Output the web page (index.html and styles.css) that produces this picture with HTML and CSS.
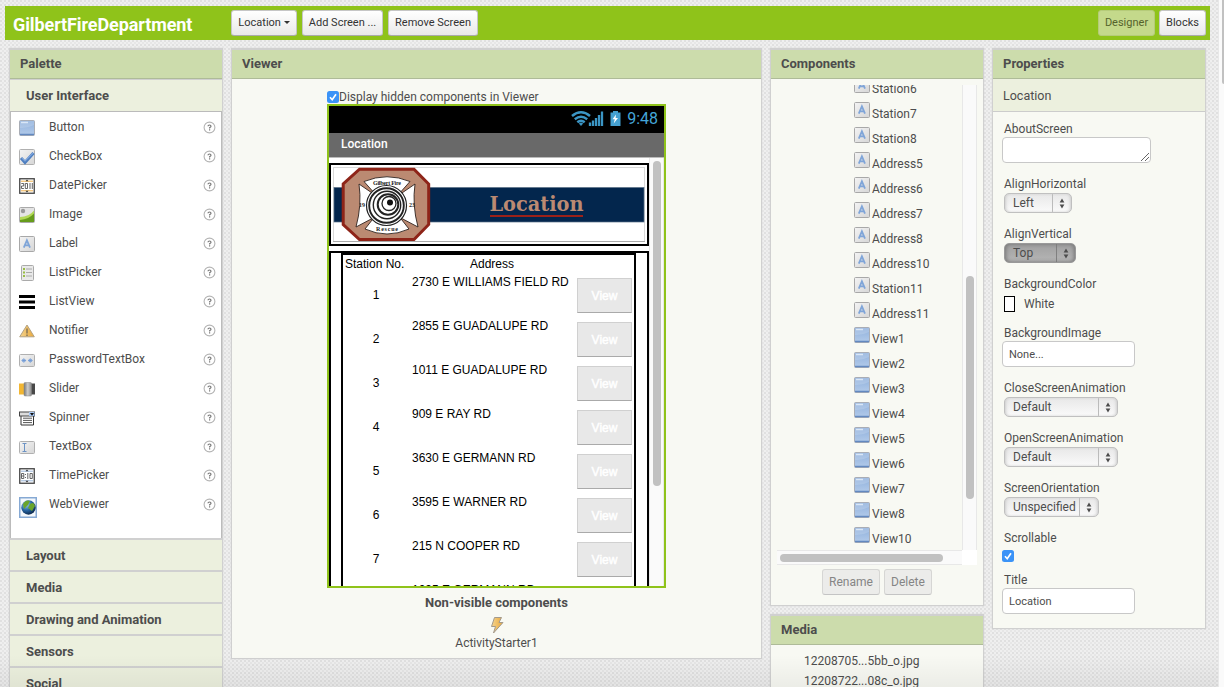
FILE: index.html
```html
<!DOCTYPE html>
<html lang="en">
<head>
<meta charset="utf-8">
<title>GilbertFireDepartment</title>
<link rel="stylesheet" href="styles.css">
</head>
<body>
<svg class="defs" width="0" height="0">
  <defs>
    <linearGradient id="blue" x1="0" y1="0" x2="0" y2="1"><stop offset="0" stop-color="#8fb0dc"/><stop offset="1" stop-color="#b3cbea"/></linearGradient>
    <linearGradient id="grey" x1="0" y1="0" x2="1" y2="1"><stop offset="0" stop-color="#f4f4f4"/><stop offset="1" stop-color="#d6d6d6"/></linearGradient>
    <linearGradient id="gold" x1="0" y1="0" x2="1" y2="0"><stop offset="0" stop-color="#f5d48e"/><stop offset="1" stop-color="#e8a83c"/></linearGradient>
    <linearGradient id="knob" x1="0" y1="0" x2="1" y2="0"><stop offset="0" stop-color="#777"/><stop offset=".5" stop-color="#ccc"/><stop offset="1" stop-color="#888"/></linearGradient>
    <radialGradient id="globe" cx=".35" cy=".3" r=".8"><stop offset="0" stop-color="#9fd0f0"/><stop offset=".5" stop-color="#2766a4"/><stop offset="1" stop-color="#061a38"/></radialGradient>
  </defs>
  <symbol id="i-button" viewBox="0 0 16 16"><rect x=".5" y=".5" width="15" height="15" rx="1" fill="url(#blue)" stroke="#a9adb5"/><path d="M1 8Q8 8.500 15 5V1H1z" fill="#fff" opacity=".16"/><path d="M2 2.500h7" stroke="#d9e6f6" stroke-width="1.500"/><path d="M1 14.500h14" stroke="#6389c0" stroke-width="1.500"/></symbol>
  <symbol id="i-check" viewBox="0 0 16 16"><rect x=".5" y=".5" width="15" height="15" rx="1" fill="url(#grey)" stroke="#b0b0b0"/><path d="M2 9l4 4.500L14.500 4" fill="none" stroke="#4f7fc0" stroke-width="3"/><path d="M3 9l3 3L14 4" fill="none" stroke="#7fa6dc" stroke-width="1.200"/></symbol>
  <symbol id="i-date" viewBox="0 0 16 16"><rect x=".75" y=".75" width="14.500" height="14.500" fill="#fff" stroke="#444" stroke-width="1.300"/><path d="M2 3.200h12M2 12.800h12" stroke="#eeb04c"/><path d="M6.500 3.200L8 1.500l1.500 1.700zM6.500 12.800L8 14.500l1.500-1.700z" fill="#333"/><path d="M2.300 5.500h2.400V8H2.500v2.500h2.400M6.300 5.500h2.200v5H6.300zM11 5v6M13.300 5v6" fill="none" stroke="#555" stroke-width=".9"/></symbol>
  <symbol id="i-image" viewBox="0 0 16 16"><rect x=".5" y=".5" width="15" height="15" rx="1" fill="#e4e4e4" stroke="#aaa"/><circle cx="4" cy="4" r="2.200" fill="#999"/><path d="M1 10Q10 10 15 3.500V15H1z" fill="#b3d957"/><path d="M1 13Q10 12 15 6.500V15H1z" fill="#669c1b"/></symbol>
  <symbol id="i-label" viewBox="0 0 16 16"><rect x=".5" y=".5" width="15" height="15" rx="1" fill="url(#grey)" stroke="#a8a8a8"/><path d="M4.800 11.700L7.900 4.300L11 11.700M5.800 9.400h4.200" fill="none" stroke="#7fa5d8" stroke-width="1.800"/></symbol>
  <symbol id="i-list" viewBox="0 0 16 16"><rect x="2.500" y=".5" width="12" height="15" rx="1" fill="#e9e9e9" stroke="#aaa"/><path d="M4 4h2M4 7.500h2M4 11h2" stroke="#98bd43" stroke-width="2"/><path d="M7 4h6M7 7.500h6M7 11h6" stroke="#aaa"/></symbol>
  <symbol id="i-lines" viewBox="0 0 16 16"><path d="M0 2.500h16M0 8h16M0 13.500h16" stroke="#000" stroke-width="3"/></symbol>
  <symbol id="i-warn" viewBox="0 0 16 16"><path d="M8 2L15.300 13.800H.7z" fill="url(#gold)" stroke="#b3a283"/><path d="M8 5.500v5M8 11.500v1.500" stroke="#776b55" stroke-width="1.300"/></symbol>
  <symbol id="i-pass" viewBox="0 0 16 16"><rect x=".5" y="2.500" width="15" height="12" rx="1" fill="url(#grey)" stroke="#b0b0b0"/><path d="M2.500 8.500h4.600M4.800 6.300v4.400M3.300 7l3 3M6.300 7l-3 3M9 8.500h4.600M11.300 6.300v4.400M9.800 7l3 3M12.800 7l-3 3" stroke="#6f9ad6" stroke-width=".9"/></symbol>
  <symbol id="i-slider" viewBox="0 0 16 16"><path d="M0 2.500h6v11H0z" fill="#f2b632"/><path d="M11 2.500h5v11h-5z" fill="#484848"/><rect x="5" y="1.500" width="7.500" height="13.500" rx="1" fill="url(#knob)" stroke="#8a8a8a" stroke-width=".5"/></symbol>
  <symbol id="i-spinner" viewBox="0 0 16 16"><path d="M2 5h12.500v10H2z" fill="#fff" stroke="#333"/><rect x=".5" y="2" width="15" height="4" fill="#ddd" stroke="#444"/><path d="M10 2h5.500v4H10z" fill="#a9c8f2"/><path d="M11 3h4l-2 2.800z" fill="#111"/><path d="M4 8.200h9M4 10.400h9M4 12.600h9" stroke="#555"/></symbol>
  <symbol id="i-text" viewBox="0 0 16 16"><rect x=".5" y="2.500" width="15" height="12" rx="1" fill="url(#grey)" stroke="#b0b0b0"/><path d="M3.500 4.500h4M5.500 4.500v8M3.500 12.500h4" stroke="#6c93c4"/></symbol>
  <symbol id="i-time" viewBox="0 0 16 16"><rect x=".75" y=".75" width="14.500" height="14.500" fill="#fff" stroke="#444" stroke-width="1.300"/><path d="M2 3.200h12M2 12.800h12" stroke="#9bb6d8"/><path d="M6.500 3.200L8 1.500l1.500 1.700zM6.500 12.800L8 14.500l1.500-1.700z" fill="#333"/><path d="M2.500 5.500h2.300v5H2.500zM2.500 8h2.300M6.500 6v1M6.500 9v1M8.800 5v6M11 5.500h2.300v5H11z" fill="none" stroke="#555" stroke-width=".9"/></symbol>
  <symbol id="i-web" viewBox="0 0 18 21"><rect x=".75" y=".75" width="16.500" height="19.500" fill="#f4f8fc" stroke="#86a9d4" stroke-width="1.500"/><circle cx="9.500" cy="10.500" r="7.200" fill="url(#globe)"/><path d="M4 7Q7 2 11 4L9 8L5 12zM11 7q4-3 5 2l-3 5-4-3z" fill="#69a52b"/></symbol>
  <symbol id="i-help" viewBox="0 0 13 13"><circle cx="6.500" cy="6.500" r="5.400" fill="#fff" stroke="#b4b4b4" stroke-width="1.100"/><path d="M5 5.300Q5 4 6.500 4T8 5.200Q8 6 6.600 6.700V7.500M6.600 8.300v1.200" fill="none" stroke="#777" stroke-width="1.200"/></symbol>
  <symbol id="i-tick" viewBox="0 0 12 12"><rect width="12" height="12" rx="2.500" fill="#3b93f7"/><path d="M3 6.300L5.200 8.700L9 3.300" fill="none" stroke="#fff" stroke-width="1.700"/></symbol>
  <symbol id="i-arrows" viewBox="0 0 6 12"><path d="M3 0.500L5.600 5H.4zM3 11.500L.4 7h5.200z" fill="#4d4d4d"/></symbol>
</svg>

<header class="topbar">
  <h1 class="project">GilbertFireDepartment</h1>
  <div class="screens">
    <button class="btn w-loc">Location <i class="caret"></i></button>
    <button class="btn w-add">Add Screen ...</button>
    <button class="btn w-rem">Remove Screen</button>
  </div>
  <div class="modes">
    <button class="btn w-des active">Designer</button>
    <button class="btn w-blk">Blocks</button>
  </div>
</header>

<main class="columns">
  <section class="panel palette">
    <h2 class="head">Palette</h2>
    <div class="drawer first">User Interface</div>
    <div class="items" id="items"></div>
    <div class="drawer">Layout</div>
    <div class="drawer">Media</div>
    <div class="drawer">Drawing and Animation</div>
    <div class="drawer">Sensors</div>
    <div class="drawer">Social</div>
  </section>

  <section class="panel viewer">
    <h2 class="head">Viewer</h2>
    <div class="stage">
      <div class="hidden-toggle"><svg class="tick"><use href="#i-tick"/></svg><span>Display hidden components in Viewer</span></div>
      <div class="phone">
        <div class="status">
          <svg width="50" height="17" viewBox="0 0 50 17">
            <g fill="none" stroke="#3b95c4" stroke-width="2.500"><path d="M1 6Q10-1.500 19 6"/><path d="M3.800 9.300Q10 4.300 16.200 9.300"/><path d="M6.300 12.300Q10 9.500 13.700 12.300"/></g>
            <path d="M7.800 13.500Q10 12 12.200 13.500L10 16z" fill="#3b95c4"/>
            <path d="M19 12.500V16M22 10.500V16M25 8V16M28 5V16M31 1.500V16" stroke="#3b95c4" stroke-width="2.300"/>
            <path d="M39.500 2.500H42V1h5v1.500h2.500V16h-10z" fill="#45a0d0"/><path d="M45 4.500L41.500 9.300h2.300L42.700 13.500L47 8h-2.400z" fill="#fff"/>
          </svg>
          <span class="clock">9:48</span>
        </div>
        <div class="titlebar">Location</div>
        <div class="canvas">
          <div class="form">
            <div class="banner">
              <svg width="312" height="75" viewBox="0 0 312 75">
                <rect x=".5" y=".5" width="311" height="74" fill="#fff" stroke="#d9d9d9"/><path d="M0 74.500h312" stroke="#aaa"/>
                <rect x="1" y="20.500" width="310" height="34.500" fill="#03264d" stroke="#5a7187" stroke-width=".7"/>
                <path d="M26.500 2.200H81L95.700 17V57.500L81 72.500H26.500L10.200 57.500V17z" fill="#bb8a72" stroke="#8e2418" stroke-width="3"/>
                <g fill="#fff" stroke="#30241f" stroke-width=".9">
                  <path d="M31 14.500Q54 5 77 14.500L65 28H43zM32 62Q54 72 76 62L65 48H43zM26 17Q29 38 23 60L42 50V28zM82 17Q79 38 85 60L66 50V28z"/>
                </g>
                <g fill="none" stroke="#222"><circle cx="53.500" cy="38.500" r="20" fill="#fff" stroke-width="1.200"/><circle cx="53.500" cy="38.500" r="17.300" stroke-width="1.900"/><circle cx="54" cy="38" r="13.700" stroke-width="1.400"/><circle cx="55" cy="37.500" r="10.300" stroke-width="2"/><circle cx="56" cy="36.500" r="7" stroke-width="1.300"/></g>
                <circle cx="57" cy="35.500" r="3" fill="#111"/>
                <g class="crest-text"><text x="40" y="18" textLength="28">Gilbert Fire</text><text x="43" y="63.500" textLength="22">Rescue</text><text x="26" y="40">19</text><text x="76" y="40">23</text></g>
                <text x="156.500" y="43.700" class="banner-text" textLength="94" lengthAdjust="spacingAndGlyphs">Location</text>
                <path d="M157 49h93" stroke="#9b2119" stroke-width="2"/>
              </svg>
            </div>
            <div class="outer"><div class="inner" id="stations"></div></div>
          </div>
          <div class="vtrack"><i class="thumb phone-thumb"></i></div>
        </div>
      </div>
      <div class="nonvis">Non-visible components</div>
      <svg class="bolt" viewBox="0 0 14 18"><path d="M4.500 1.500h7L9 6.500h4L3.500 17l2-6.500h-4z" fill="url(#gold)" stroke="#a39a8c"/></svg>
      <div class="starter">ActivityStarter1</div>
    </div>
  </section>

  <div class="stack">
    <section class="panel components">
      <h2 class="head">Components</h2>
      <div class="tree-row">
        <div class="tree"><div class="tree-list" id="tree"></div></div>
        <div class="vtrack tree-track"><i class="thumb tree-thumb"></i></div>
      </div>
      <div class="h-row"><div class="htrack"><i class="hthumb"></i></div><div class="corner"></div></div>
      <div class="actions"><button class="btn dis w-ren">Rename</button><button class="btn dis w-del">Delete</button></div>
    </section>
    <section class="panel media">
      <h2 class="head">Media</h2>
      <div class="files"><div>12208705...5bb_o.jpg</div><div>12208722...08c_o.jpg</div></div>
    </section>
  </div>

  <section class="panel properties">
    <h2 class="head">Properties</h2>
    <div class="sub">Location</div>
    <div class="props">
      <div class="field f55"><label>AboutScreen</label><div class="box area"><svg width="8" height="8"><path d="M0 8L8 0M4 8L8 4" stroke="#666"/></svg></div></div>
      <div class="field"><label>AlignHorizontal</label><div class="select s-left"><span>Left</span><svg><use href="#i-arrows"/></svg></div></div>
      <div class="field"><label>AlignVertical</label><div class="select dark s-top"><span>Top</span><svg><use href="#i-arrows"/></svg></div></div>
      <div class="field f49"><label>BackgroundColor</label><div class="color"><i></i>White</div></div>
      <div class="field f55"><label>BackgroundImage</label><div class="box">None...</div></div>
      <div class="field"><label>CloseScreenAnimation</label><div class="select s-def"><span>Default</span><svg><use href="#i-arrows"/></svg></div></div>
      <div class="field"><label>OpenScreenAnimation</label><div class="select s-def"><span>Default</span><svg><use href="#i-arrows"/></svg></div></div>
      <div class="field"><label>ScreenOrientation</label><div class="select s-uns"><span>Unspecified</span><svg><use href="#i-arrows"/></svg></div></div>
      <div class="field f42"><label>Scrollable</label><svg class="tick prop-tick"><use href="#i-tick"/></svg></div>
      <div class="field f57"><label>Title</label><div class="box">Location</div></div>
    </div>
  </section>
</main>
<div class="page-track"><i></i></div>
<div class="fade"></div>
<script src="app.js"></script>
</body>
</html>
```
FILE: styles.css
```css
* { box-sizing: border-box; }
body {
  margin: 0; height: 687px; overflow: hidden; position: relative;
  font: 12px/17px Roboto, "Liberation Sans", sans-serif; color: #4d4d4d;
  background-color: #efefef;
  background-image:
    radial-gradient(circle at 1px 1px, #e0e0e0 0.8px, transparent 1px),
    radial-gradient(circle at 3px 3px, #e6e6e6 0.8px, transparent 1px);
  background-size: 4px 4px;
}
h1, h2 { margin: 0; }
.defs { position: absolute; }
.topbar { margin: 6px 0 0 5px; width: 1205px; height: 34px; background: #8fc31a; display: flex; align-items: flex-start; }
.project { width: 226px; padding: 7px 0 0 8px; font-size: 18px; line-height: 24px; color: #fff; letter-spacing: -0.1px; white-space: nowrap; }
.screens { display: flex; gap: 5px; padding-top: 4px; flex: 1; }
.modes { display: flex; gap: 4px; padding: 4px 4px 0 0; }
.btn {
  height: 26px; padding: 0; border: 1px solid #c6c6c6; border-bottom-color: #aaa; border-radius: 3px;
  background: linear-gradient(#fff, #e9e9e9); color: #333; font: 11px/20px Roboto, sans-serif; white-space: nowrap;
}
.w-loc { width: 66px; } .w-add { width: 81px; } .w-rem { width: 90px; }
.w-des { width: 57px; } .w-blk { width: 47px; } .w-ren { width: 58px; } .w-del { width: 48px; }
.caret { display: inline-block; border: 3px solid transparent; border-top: 3px solid #333; border-bottom: 0; vertical-align: 2px; }
.btn.active { background: #c4d98b; border-color: #b5cb79; color: #55632b; }
.btn.dis { background: #ececea; border-color: #d6d6d4; border-bottom-color: #c4c4c4; color: #858585; font-size: 12px; }
.columns { display: flex; align-items: flex-start; gap: 8px; padding: 8px 0 0 9px; }
.panel { width: 214px; border: 1px solid #d0d0d0; border-top-width: 2px; background: #f8f9f3; box-shadow: 0 0 1px #ccc; }
.head { height: 29px; padding: 0 10px; border-bottom: 1px solid #aebb98; background: #ccdcac; font-size: 13px; line-height: 28px; font-weight: 700; }
.drawer { height: 32px; padding-left: 16px; border-top: 2px solid #d0d0d0; background: #ecf0de; font-size: 13px; font-weight: 700; line-height: 31px; }
.drawer.first { border-top-width: 1px; line-height: 32px; }
.items { height: 429px; padding-top: 1px; border: 1px solid #bbb; background: #fff; margin-bottom: -2px; }
.item { display: flex; align-items: center; height: 29px; padding: 0 5px 0 8px; }
.item .icon { width: 16px; height: 16px; }
.item .icon.web { width: 18px; height: 21px; margin: 5px -2px 0 0; }
.item span { flex: 1; padding-left: 14px; margin-top: -1px; }
.item .help { width: 13px; height: 13px; margin-top: -1px; }
.viewer { width: 531px; height: 611px; }
.stage { padding: 10px 0 0 95px; }
.hidden-toggle { display: flex; align-items: center; height: 15px; }
.hidden-toggle span { padding-top: 1px; }
.tick { width: 12px; height: 12px; display: block; }
.hidden-toggle .tick { margin-top: 1px; }
.phone { width: 339px; height: 484px; border: 2px solid #8fc31a; background: #fff; overflow: hidden; }
.status { height: 27px; background: #000; display: flex; align-items: center; justify-content: flex-end; padding-right: 6px; gap: 6px; }
.status svg { margin-top: -3px; }
.clock { color: #45a6d8; font-size: 16px; margin-top: -2px; }
.titlebar { height: 24px; background: #696969; color: #fff; font-weight: 500; line-height: 22px; padding-left: 12px; }
.canvas { display: flex; height: 429px; border-top: 1px solid #bbb; }
.form { width: 320px; padding-top: 5px; font-family: "Liberation Sans", sans-serif; color: #000; }
.banner { height: 83px; border: 2px solid #000; padding: 2px; }
.banner svg { display: block; }
.crest-text { font: bold 6px "Liberation Serif", serif; fill: #222; }
.banner-text { font: bold 20px "DejaVu Serif", serif; fill: #bb8a72; }
.outer { margin-top: 5px; height: 400px; border: 2px solid #000; padding: 0 11px 0 10px; }
.inner { height: 400px; border: 2px solid #000; padding: 1px 2px; }
.table-head { display: grid; grid-template-columns: 66px 162px; height: 17px; line-height: 17px; }
.table-head span + span { text-align: center; }
.station { display: grid; grid-template-columns: 67px 165px 55px; height: 44px; }
.station .no { text-align: center; padding: 14px 5px 0 0; }
.station .addr { white-space: nowrap; line-height: 18px; }
.station .view { height: 35px; margin-top: 5px; border: 1px solid #d0d0d0; border-bottom-color: #aaa; background: #e8e8e8; color: #fff; text-align: center; line-height: 35px; -webkit-text-stroke: 0.5px #fff; }
.vtrack { width: 15px; background: #fafafa; border: solid #e8e8e8; border-width: 0 1px; flex: none; }
.thumb { display: block; width: 8px; margin-left: 3px; border-radius: 4px; background: #c1c1c1; }
.phone-thumb { height: 325px; margin-top: 3px; }
.nonvis { width: 339px; margin-top: 5px; text-align: center; font-size: 13px; font-weight: 700; line-height: 19px; }
.bolt { display: block; width: 14px; height: 18px; margin: 4px 0 0 163px; }
.starter { width: 339px; text-align: center; line-height: 18px; }
.stack { display: flex; flex-direction: column; gap: 8px; }
.components { height: 558px; }
.tree-row { display: flex; height: 465px; margin: 6px 6px 0; }
.tree { flex: 1; overflow: hidden; }
.tree-list { margin: -8px 0 0 77px; }
.node { display: flex; gap: 2px; height: 25px; }
.node svg { width: 16px; height: 16px; flex: none; }
.node span { padding-top: 4px; }
.tree-thumb { height: 223px; margin-top: 191px; }
.h-row { display: flex; height: 15px; margin: 0 6px; }
.htrack { flex: 1; border: solid #e8e8e8; border-width: 1px 0; background: #fafafa; padding: 3px; }
.hthumb { display: block; width: 163px; height: 8px; border-radius: 4px; background: #c1c1c1; }
.corner { width: 15px; background: #fff; }
.actions { display: flex; gap: 4px; padding: 4px 0 0 51px; }
.media { height: 90px; }
.files { padding: 6px 0 0 33px; line-height: 20px; }
.properties { height: 581px; }
.sub { height: 33px; padding-left: 10px; border-bottom: 1px solid #ccc; background: #ecf0de; line-height: 34px; font-size: 12.5px; }
.props { padding: 8px 0 0 11px; }
.field { height: 50px; }
.field label { display: block; height: 17px; line-height: 19px; }
.f55 { height: 55px; } .f49 { height: 49px; } .f42 { height: 42px; } .f57 { height: 57px; }
.box { width: 133px; height: 26px; margin-left: -2px; border: 1px solid #c8c8c8; border-radius: 4px; background: #fff; padding-left: 6px; font-size: 11px; line-height: 25px; }
.box.area { width: 149px; display: flex; justify-content: flex-end; align-items: flex-end; padding: 1px; }
.select { height: 20px; margin-top: 1px; border: 1px solid #c0c0c0; border-radius: 5px; display: flex; align-items: center; justify-content: space-between; padding: 0 6px 0 8px; box-shadow: inset 2px 0 3px -1px #ccc, inset -2px 0 3px -1px #ccc; background: linear-gradient(90deg, transparent calc(100% - 19px), #bbb calc(100% - 19px), #bbb calc(100% - 18px), transparent calc(100% - 18px)), linear-gradient(#e8e8e8, #fafafa); }
.select svg { width: 6px; height: 11px; }
.select.dark { background: linear-gradient(90deg, transparent calc(100% - 19px), #808080 calc(100% - 19px), #808080 calc(100% - 18px), transparent calc(100% - 18px)), linear-gradient(#a0a0a0, #b6b6b6); border-color: #999; box-shadow: inset 2px 0 4px -1px #777, inset -2px 0 4px -1px #777; }
.s-left { width: 68px; } .s-top { width: 72px; } .s-def { width: 114px; } .s-uns { width: 95px; }
.color { display: flex; align-items: center; gap: 9px; padding-top: 4px; height: 20px; }
.color i { width: 11px; height: 16px; border: 1px solid #000; background: #fff; }
.prop-tick { margin: 4px 0 0 -2px; }
.page-track { position: absolute; top: 0; right: 0; width: 6px; height: 687px; background: #fafafa; border-left: 1px solid #e8e8e8; }
.page-track i { display: block; width: 2px; height: 84px; margin-left: 3px; background: #c1c1c1; border-radius: 0 0 0 2px; }
.fade { position: absolute; left: 0; bottom: 0; width: 1218px; height: 32px; background: linear-gradient(transparent, rgba(0, 0, 0, 0.05)); }
```
FILE: app.js
```js
const use = (id, cls) => `<svg class="${cls}"><use href="#i-${id}"/></svg>`;

const palette = [
  ['button', 'Button'], ['check', 'CheckBox'], ['date', 'DatePicker'], ['image', 'Image'],
  ['label', 'Label'], ['list', 'ListPicker'], ['lines', 'ListView'], ['warn', 'Notifier'],
  ['pass', 'PasswordTextBox'], ['slider', 'Slider'], ['spinner', 'Spinner'], ['text', 'TextBox'],
  ['time', 'TimePicker'], ['web', 'WebViewer'],
];
document.getElementById('items').innerHTML = palette
  .map(([id, name]) => `<div class="item">${use(id, 'icon ' + id)}<span>${name}</span>${use('help', 'help')}</div>`)
  .join('');

const addresses = [
  '2730 E WILLIAMS FIELD RD', '2855 E GUADALUPE RD', '1011 E GUADALUPE RD', '909 E RAY RD',
  '3630 E GERMANN RD', '3595 E WARNER RD', '215 N COOPER RD', '1095 E GERMANN RD',
];
document.getElementById('stations').innerHTML =
  '<div class="table-head"><span>Station No.</span><span>Address</span></div>' +
  addresses
    .map((a, i) => `<div class="station"><div class="no">${i + 1}</div><div class="addr">${a}</div><div class="view">View</div></div>`)
    .join('');

const labels = ['Station6', 'Station7', 'Station8', 'Address5', 'Address6', 'Address7', 'Address8', 'Address10', 'Station11', 'Address11'];
const views = ['View1', 'View2', 'View3', 'View4', 'View5', 'View6', 'View7', 'View8', 'View10'];
document.getElementById('tree').innerHTML =
  labels.map((n) => `<div class="node">${use('label', '')}<span>${n}</span></div>`).join('') +
  views.map((n) => `<div class="node">${use('button', '')}<span>${n}</span></div>`).join('');
```
